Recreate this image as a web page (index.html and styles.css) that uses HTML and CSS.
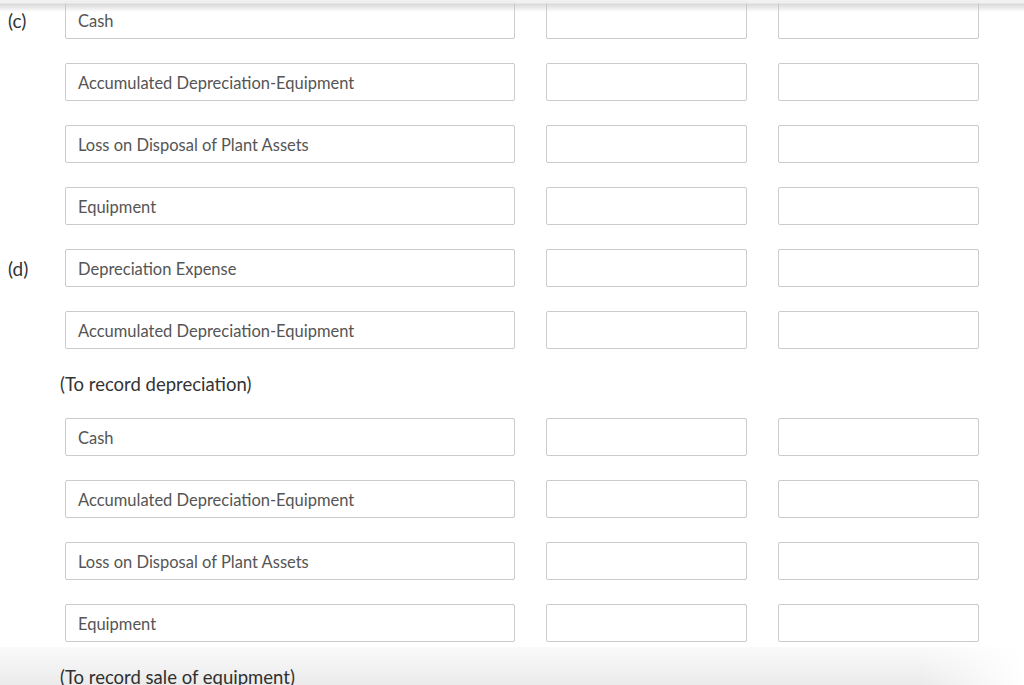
FILE: index.html
```html
<!DOCTYPE html>
<html>
<head>
<meta charset="utf-8">
<link rel="stylesheet" href="styles.css">
</head>
<body>
<div class="page">
  <div class="row"><div class="lbl">(c)</div><input class="acct" value="Cash" readonly><input class="amt" readonly><input class="amt" readonly></div>
  <div class="row"><div class="lbl"></div><input class="acct" value="Accumulated Depreciation-Equipment" readonly><input class="amt" readonly><input class="amt" readonly></div>
  <div class="row"><div class="lbl"></div><input class="acct" value="Loss on Disposal of Plant Assets" readonly><input class="amt" readonly><input class="amt" readonly></div>
  <div class="row"><div class="lbl"></div><input class="acct" value="Equipment" readonly><input class="amt" readonly><input class="amt" readonly></div>
  <div class="row"><div class="lbl">(d)</div><input class="acct" value="Depreciation Expense" readonly><input class="amt" readonly><input class="amt" readonly></div>
  <div class="row"><div class="lbl"></div><input class="acct" value="Accumulated Depreciation-Equipment" readonly><input class="amt" readonly><input class="amt" readonly></div>
  <div class="note">(To record depreciation)</div>
  <div class="row"><div class="lbl"></div><input class="acct" value="Cash" readonly><input class="amt" readonly><input class="amt" readonly></div>
  <div class="row"><div class="lbl"></div><input class="acct" value="Accumulated Depreciation-Equipment" readonly><input class="amt" readonly><input class="amt" readonly></div>
  <div class="row"><div class="lbl"></div><input class="acct" value="Loss on Disposal of Plant Assets" readonly><input class="amt" readonly><input class="amt" readonly></div>
  <div class="row"><div class="lbl"></div><input class="acct" value="Equipment" readonly><input class="amt" readonly><input class="amt" readonly></div>
  <div class="note">(To record sale of equipment)</div>
</div>
<div class="top-shade"></div>
<div class="bottom-shade"></div>
</body>
</html>
```
FILE: styles.css
```css
html, body {
  margin: 0;
  padding: 0;
  background: #fff;
  overflow: hidden;
  height: 685px;
}
body {
  font-family: Lato, "Liberation Sans", sans-serif;
  color: #333;
  position: relative;
}
.page {
  padding: 1px 0 0 8px;
}
.row {
  display: flex;
  align-items: center;
  height: 38px;
  margin-bottom: 24px;
}
.lbl {
  width: 57px;
  font-size: 19px;
  color: #333;
  padding-top: 1px;
}
.acct, .amt {
  box-sizing: border-box;
  height: 38px;
  border: 1px solid #cbcbcb;
  border-radius: 2px;
  background: #fff;
  font-family: Lato, "Liberation Sans", sans-serif;
  font-size: 16.5px;
  color: #555;
  padding: 2px 12px 0 12px;
  margin: 0;
  outline: none;
}
.acct {
  width: 450px;
  margin-right: 31px;
}
.amt {
  width: 201px;
  margin-right: 31px;
}
.note {
  margin: 0 0 23px 52px;
  font-size: 18.5px;
  line-height: 22px;
  color: #333;
}
.top-shade {
  position: absolute;
  top: 0;
  left: 0;
  right: 0;
  height: 12px;
  background: linear-gradient(to bottom, rgba(240,240,240,0.9) 0, rgba(240,240,240,0.9) 3px, rgba(200,200,200,0.7) 4px, rgba(255,255,255,0) 12px);
  pointer-events: none;
}
.bottom-shade {
  position: absolute;
  left: 0;
  right: 0;
  bottom: 0;
  height: 38px;
  background: linear-gradient(to bottom, rgba(0,0,0,0.02), rgba(0,0,0,0.08));
  -webkit-mask-image: linear-gradient(to right, #000 0, #000 90%, transparent 100%);
  mask-image: linear-gradient(to right, #000 0, #000 90%, transparent 100%);
  pointer-events: none;
}
```
